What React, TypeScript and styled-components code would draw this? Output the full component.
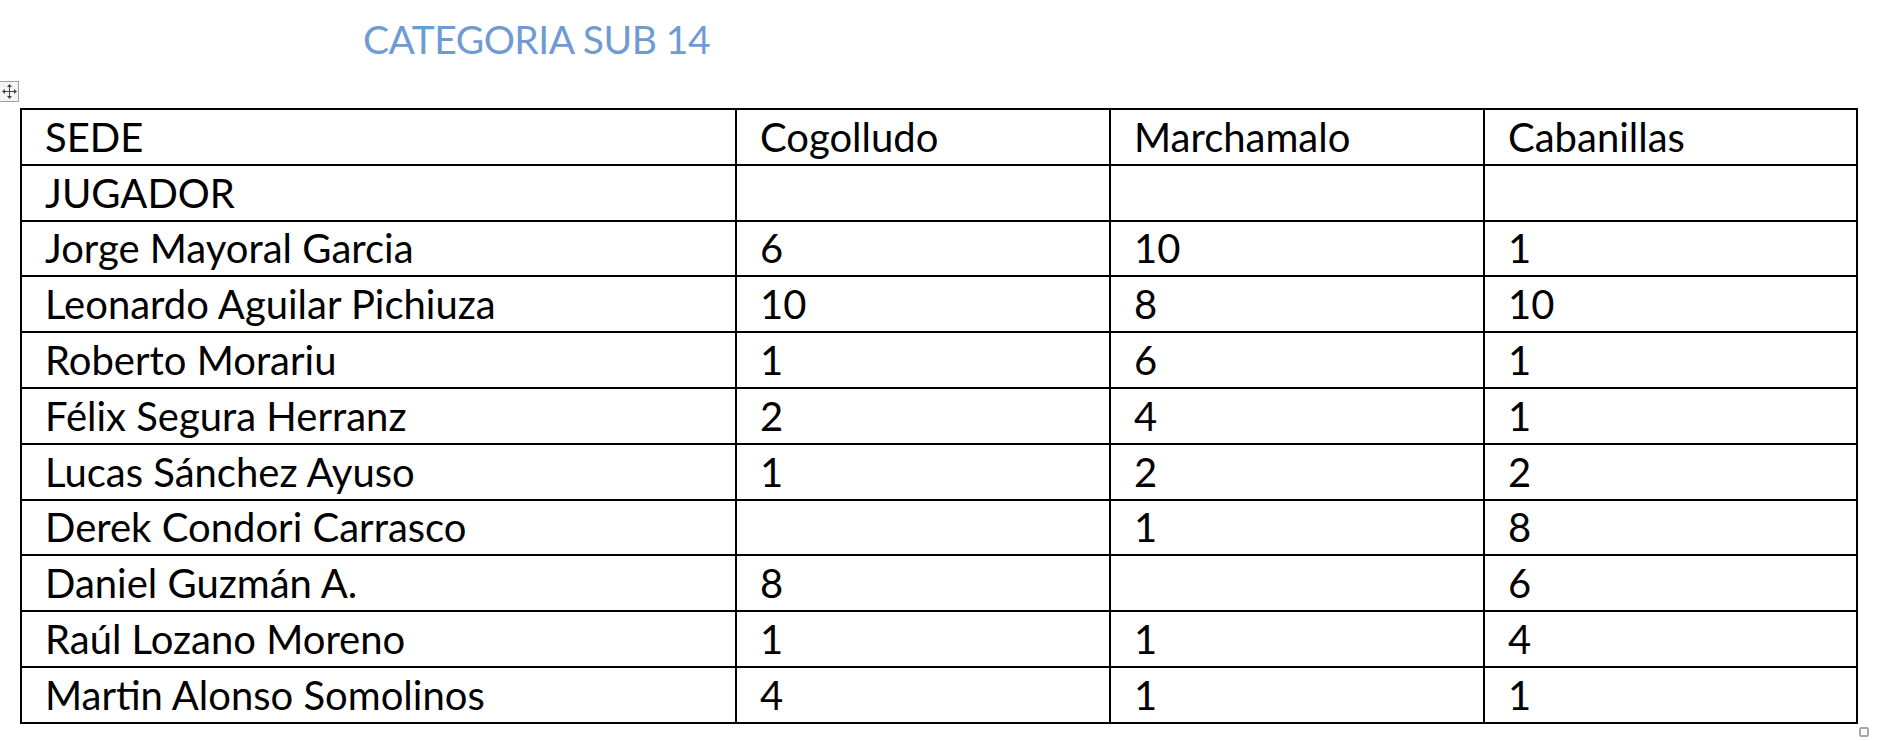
import styled, { createGlobalStyle } from 'styled-components';

const GlobalStyle = createGlobalStyle`
  html, body {
    margin: 0;
    padding: 0;
    background: #fff;
  }
  body {
    font-family: Lato, 'Liberation Sans', sans-serif;
  }
`;

const Page = styled.div`
  width: 1884px;
  height: 742px;
  overflow: hidden;
  background: #fff;
`;

const Header = styled.div`
  height: 108px;
  box-sizing: border-box;
  padding: 20px 0 0 363px;
`;

const Title = styled.h1`
  margin: 0;
  font-family: Lato, 'Liberation Sans', sans-serif;
  font-weight: 400;
  font-size: 39px;
  line-height: 1;
  letter-spacing: -0.5px;
  color: #6f9bd3;
`;

const TableWrap = styled.div`
  position: relative;
  margin-left: 20px;
  width: 1836px;
`;

const Sheet = styled.table`
  border-collapse: collapse;
  table-layout: fixed;
  width: 1836px;
`;

const Column = styled.col<{ $w: number }>`
  width: ${(p) => p.$w}px;
`;

const Row = styled.tr`
  height: 55.8px;
`;

const Cell = styled.td`
  box-sizing: border-box;
  border: 2px solid #000;
  padding: 0 0 0 23px;
  vertical-align: middle;
  font-family: Lato, 'Liberation Sans', sans-serif;
  font-size: 40px;
  line-height: 1;
  color: #000;
  white-space: nowrap;
  overflow: hidden;
`;

const MoveHandle = styled.div`
  position: absolute;
  left: -20px;
  top: -27px;
  width: 19px;
  height: 21px;
  box-sizing: border-box;
  border: 1px solid #a0a0a0;
  border-left: none;
  background: #f4f4f4;
  display: flex;
  align-items: center;
  justify-content: center;
`;

const ResizeHandle = styled.div`
  position: absolute;
  right: -13px;
  bottom: -13px;
  width: 10px;
  height: 10px;
  box-sizing: border-box;
  border: 2px solid #a8a8a8;
  border-radius: 2px;
  background: #fff;
`;

const MoveIcon = () => (
  <svg width="15" height="15" viewBox="0 0 15 15" fill="#444">
    <rect x="7" y="2" width="1" height="11" />
    <rect x="2" y="7" width="11" height="1" />
    <polygon points="7.5,0 5,3 10,3" />
    <polygon points="7.5,15 5,12 10,12" />
    <polygon points="0,7.5 3,5 3,10" />
    <polygon points="15,7.5 12,5 12,10" />
  </svg>
);

type Entry = [string, string, string, string];

const rows: Entry[] = [
  ['SEDE', 'Cogolludo', 'Marchamalo', 'Cabanillas'],
  ['JUGADOR', '', '', ''],
  ['Jorge Mayoral Garcia', '6', '10', '1'],
  ['Leonardo Aguilar Pichiuza', '10', '8', '10'],
  ['Roberto Morariu', '1', '6', '1'],
  ['Félix Segura Herranz', '2', '4', '1'],
  ['Lucas Sánchez Ayuso', '1', '2', '2'],
  ['Derek Condori Carrasco', '', '1', '8'],
  ['Daniel Guzmán A.', '8', '', '6'],
  ['Raúl Lozano Moreno', '1', '1', '4'],
  ['Martin Alonso Somolinos', '4', '1', '1'],
];

const widths = [715, 374, 374, 373];

export default function App() {
  return (
    <Page>
      <GlobalStyle />
      <Header>
        <Title>CATEGORIA SUB 14</Title>
      </Header>
      <TableWrap>
        <MoveHandle>
          <MoveIcon />
        </MoveHandle>
        <Sheet>
          <colgroup>
            {widths.map((w, i) => (
              <Column key={i} $w={w} />
            ))}
          </colgroup>
          <tbody>
            {rows.map((r, i) => (
              <Row key={i}>
                {r.map((c, j) => (
                  <Cell key={j}>{c}</Cell>
                ))}
              </Row>
            ))}
          </tbody>
        </Sheet>
        <ResizeHandle />
      </TableWrap>
    </Page>
  );
}
